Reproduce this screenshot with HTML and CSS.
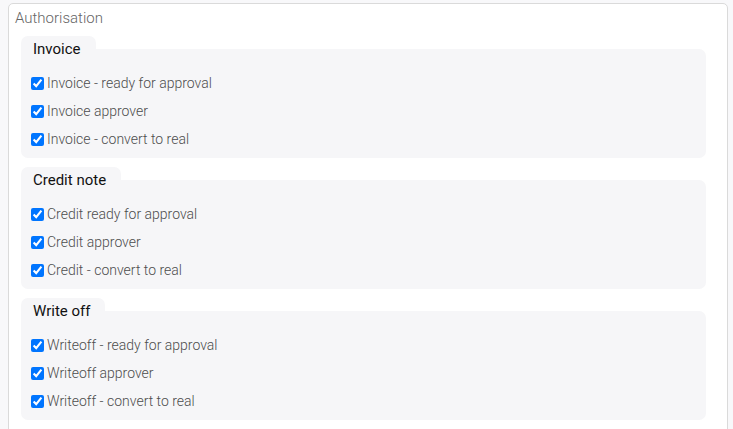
FILE: index.html
```html
<!DOCTYPE html>
<html lang="en">
<head>
  <meta charset="UTF-8">
  <title>Authorisation</title>
  <link rel="stylesheet" href="styles.css">
</head>
<body>
  <div class="panel">
    <div class="panel-title">Authorisation</div>

    <fieldset class="group">
      <legend>Invoice</legend>
      <div class="group-body">
        <label class="check"><input type="checkbox" checked> Invoice - ready for approval</label>
        <label class="check"><input type="checkbox" checked> Invoice approver</label>
        <label class="check"><input type="checkbox" checked> Invoice - convert to real</label>
      </div>
    </fieldset>

    <fieldset class="group">
      <legend>Credit note</legend>
      <div class="group-body">
        <label class="check"><input type="checkbox" checked> Credit ready for approval</label>
        <label class="check"><input type="checkbox" checked> Credit approver</label>
        <label class="check"><input type="checkbox" checked> Credit - convert to real</label>
      </div>
    </fieldset>

    <fieldset class="group">
      <legend>Write off</legend>
      <div class="group-body">
        <label class="check"><input type="checkbox" checked> Writeoff - ready for approval</label>
        <label class="check"><input type="checkbox" checked> Writeoff approver</label>
        <label class="check"><input type="checkbox" checked> Writeoff - convert to real</label>
      </div>
    </fieldset>
  </div>
</body>
</html>
```

FILE: styles.css
```css
html, body { height: 100%; }
body { margin: 0; padding: 3px 5px 0 8px; background-color: #f8f8fa; font-family: Roboto, "Liberation Sans", Arial, sans-serif; overflow: hidden; }
.panel { background: #fff; border: 1px solid #dadada; border-radius: 5px; padding: 5px 21px 20px 6px; min-height: 100%; }
.panel-title { color: #666; font-size: 15px; line-height: 18px; font-weight: 300; margin-bottom: 9px; }
.group { margin: 0 0 9px 6px; padding: 0; border: none; background-color: #f6f6f8; border-radius: 0 7px 7px 7px; min-width: 0; }
.group legend { background-color: #f6f6f8; border-radius: 7px 7px 0 0; padding: 6px 15px 4px 12px; font-size: 15px; line-height: 15px; color: #111; }
.group-body { padding: 8px 0 5px 6px; display: flex; flex-direction: column; }
.check { display: flex; align-items: center; height: 28px; color: #4d4d4d; font-size: 14px; font-weight: 300; }
.check input { margin: 0 3px 0 4px; width: 13px; height: 13px; }
```
